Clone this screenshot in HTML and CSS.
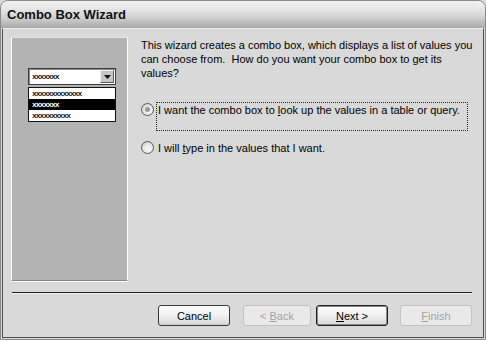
FILE: index.html
```html
<!doctype html>
<html>
  <head>
    <title>Combo Box Wizard</title>
    <meta charset="utf-8"/>
    <link rel="stylesheet" href="styles.css">
  </head>
  <body>
    <div class="window">
      <div class="titlebar">Combo Box Wizard</div>
      <div class="client">
        <div class="main">
          <div class="preview">
            <div class="combo">
              <span class="combo-text">xxxxxxx</span>
              <span class="combo-btn">
                <svg width="7" height="4" viewBox="0 0 7 4"><path d="M0 0h7L3.5 4z" fill="#111"/></svg>
              </span>
            </div>
            <ul class="list">
              <li>xxxxxxxxxxxxx</li>
              <li class="sel">xxxxxxx</li>
              <li>xxxxxxxxxx</li>
            </ul>
          </div>
          <div class="content">
            <p class="intro">This wizard creates a combo box, which displays a list of values you<br>can choose from.&nbsp; How do you want your combo box to get its<br>values?</p>
            <div class="option">
              <span class="radio checked"></span>
              <span class="option-text focus">I want the combo box to <u>l</u>ook up the values in a table or query.</span>
            </div>
            <div class="option">
              <span class="radio"></span>
              <span class="option-text">I will <u>t</u>ype in the values that I want.</span>
            </div>
          </div>
        </div>
        <div class="sep"></div>
        <div class="buttons">
          <button class="btn cancel">Cancel</button>
          <button class="btn back" disabled>&lt; <u>B</u>ack</button>
          <button class="btn next default"><u>N</u>ext &gt;</button>
          <button class="btn finish" disabled><u>F</u>inish</button>
        </div>
      </div>
    </div>
  </body>
</html>
```

FILE: styles.css
```css
html,body{
  margin:0;
  padding:0;
  background:#d9d9d9;
}
*{
  font-family:"Liberation Sans",Arial,sans-serif;
}
.window{
  width:486px;
  height:340px;
  box-sizing:border-box;
  border:1px solid #8a8a8a;
  border-radius:8px 8px 0 0;
  background:#d9d9d9;
  display:flex;
  flex-direction:column;
  overflow:hidden;
}
.titlebar{
  height:27px;
  box-sizing:border-box;
  padding:1px 0 0 6px;
  line-height:26px;
  font-size:13px;
  font-weight:bold;
  color:#111;
  background:linear-gradient(#f2f2f2 0,#e8e8e8 25%,#d2d2d2 60%,#a8a8a8 100%);
}
.client{
  flex:1;
  margin:0 1px 1px;
  border:1px solid #4f4f4f;
  border-top:1px solid #ececec;
  display:flex;
  flex-direction:column;
  padding:8px 11px 0 8px;
}
.main{
  display:flex;
  gap:13px;
}
.preview{
  flex:none;
  width:117px;
  height:244px;
  box-sizing:border-box;
  background:#b3b3b3;
  border:1px solid #fff;
  border-top-color:#e4e4e4;
  border-bottom-color:#878787;
  box-shadow:0 1px #fff;
  padding:30px 0 0 16px;
}
.combo{
  width:88px;
  height:17px;
  box-sizing:border-box;
  background:#fff;
  border:1px solid #3d3d3d;
  box-shadow:inset 1px 1px #8c8c8c;
  display:flex;
  align-items:center;
  justify-content:space-between;
}
.combo-text,.list li{
  font-family:"Liberation Mono",monospace;
  font-size:8px;
  font-weight:bold;
  letter-spacing:-1px;
  color:#111;
}
.combo-text{
  padding-left:3px;
}
.combo-btn{
  width:14px;
  height:13px;
  margin-right:1px;
  background:#c6c6c6;
  border:1px solid;
  border-color:#f0f0f0 #5a5a5a #5a5a5a #f0f0f0;
  box-sizing:border-box;
  display:flex;
  align-items:center;
  justify-content:center;
}
.list{
  list-style:none;
  margin:2px 0 0;
  padding:0;
  width:88px;
  box-sizing:border-box;
  background:#fff;
  border:1px solid #111;
}
.list li{
  height:11px;
  line-height:11px;
  padding-left:3px;
}
.list li.sel{
  background:#000;
  color:#fff;
}
.content{
  flex:1;
  min-width:0;
  padding-top:1px;
}
.intro{
  margin:0;
  font-size:11px;
  line-height:14px;
  color:#000;
  white-space:nowrap;
}
.option{
  display:flex;
  align-items:flex-start;
  gap:2px;
  margin-top:9px;
  font-size:11px;
  line-height:14px;
}
.intro + .option{
  margin-top:22px;
}
.radio{
  flex:none;
  width:13px;
  height:13px;
  box-sizing:border-box;
  margin-top:1px;
  border:1px solid #5a5a5a;
  border-radius:50%;
  background:radial-gradient(circle at 60% 65%,#fafafa 0,#e6e6e6 50%,#bdbdbd 100%);
  display:flex;
  align-items:center;
  justify-content:center;
}
.radio.checked::after{
  content:"";
  width:5px;
  height:5px;
  border-radius:50%;
  background:#9a9a9a;
}
.option-text{
  border:1px dotted transparent;
  padding:0 0 0 1px;
  white-space:nowrap;
}
.option-text.focus{
  border-color:#222;
  width:309px;
  height:27px;
}
.sep{
  margin-top:11px;
  margin-left:1px;
  height:1px;
  background:#1f1f1f;
  box-shadow:0 1px #f2f2f2;
}
.buttons{
  display:flex;
  justify-content:flex-end;
  margin-top:12px;
}
.btn{
  height:21px;
  width:72px;
  padding:0;
  font-size:11px;
  color:#000;
  border:1px solid #3a3a3a;
  border-radius:3px;
  background:linear-gradient(#fdfdfd 0,#f0f0f0 50%,#dcdcdc 90%,#c8c8c8 100%);
}
.btn.back{
  width:68px;
  margin-left:13px;
}
.btn.next{
  margin-left:5px;
  border-color:#222;
  box-shadow:inset 0 0 0 1px #8a8a8a;
}
.btn.finish{
  margin-left:12px;
}
.btn:disabled{
  color:#a3a3a3;
  border-color:#c3c3c3;
  background:#e9e9e9;
}
```
